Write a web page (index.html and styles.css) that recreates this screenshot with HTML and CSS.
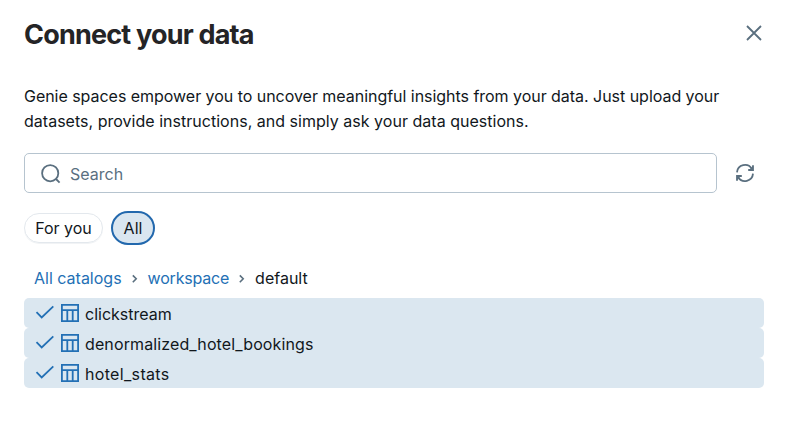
FILE: index.html
```
<!DOCTYPE html>
<html lang="en">
<head>
<meta charset="utf-8">
<title>Connect your data</title>
<link rel="stylesheet" href="styles.css">
</head>
<body>
<svg class="defs" width="0" height="0" aria-hidden="true">
  <symbol id="check" viewBox="0 0 20 20"><path d="M1.5 9.2L6.7 14.5L18.3 3.4"/></symbol>
  <symbol id="table" viewBox="0 0 20 20"><path d="M1.9 1.9H18.1V18.1H1.9ZM1.9 7.2H18.1M7.3 7.2V18.1M12.7 7.2V18.1"/></symbol>
  <symbol id="chevron" viewBox="0 0 8 10"><path d="M1.8 1.4L5.2 4.8L1.8 8.2"/></symbol>
</svg>
<main class="dialog">
  <header class="header">
    <h1 class="title">Connect your data</h1>
    <button class="icon-button" aria-label="Close"><svg class="icon close" viewBox="0 0 20 20"><path d="M3 3L17 17M17 3L3 17"/></svg></button>
  </header>
  <p class="intro"><span class="line-one">Genie spaces empower you to uncover meaningful insights from your data. Just upload your</span><br><span class="line-two">datasets, provide instructions, and simply ask your data questions.</span></p>
  <div class="search-row">
    <div class="search">
      <svg class="icon" viewBox="0 0 20 20"><circle cx="9.2" cy="9.2" r="8.1"/><path d="M15 15L18.6 18.6"/></svg>
      <span class="placeholder">Search</span>
    </div>
    <button class="icon-button" aria-label="Refresh"><svg class="icon" viewBox="0 0 20 20"><path d="M2 9.3A8 8 0 0 1 16.8 5.8M18 10.7A8 8 0 0 1 3.2 14.2"/><path d="M18 2.2V7H13.2M2 17.8V13H6.8"/><path class="solid" d="M18 3V7H14ZM2 17V13H6Z"/></svg></button>
  </div>
  <div class="filters">
    <button class="pill"><span class="foryou">For you</span></button>
    <button class="pill selected">All</button>
  </div>
  <nav class="crumbs">
    <a class="catalogs">All catalogs</a><svg class="chevron"><use href="#chevron"/></svg><a class="workspace">workspace</a><svg class="chevron"><use href="#chevron"/></svg><span class="current">default</span>
  </nav>
  <ul class="tables">
    <li class="row"><svg class="icon"><use href="#check"/></svg><svg class="icon grid"><use href="#table"/></svg><span class="name-a">clickstream</span></li>
    <li class="row"><svg class="icon"><use href="#check"/></svg><svg class="icon grid"><use href="#table"/></svg><span class="name-b">denormalized_hotel_bookings</span></li>
    <li class="row"><svg class="icon"><use href="#check"/></svg><svg class="icon grid"><use href="#table"/></svg><span class="name-c">hotel_stats</span></li>
  </ul>
</main>
</body>
</html>
```
FILE: styles.css
```
* { box-sizing: border-box; }
body { margin: 0; background: #fff; color: #11171c; font: 16px/25px Inter, "Liberation Sans", sans-serif; }
.defs { position: absolute; }
.dialog { padding: 14px 23px 0 24px; }
button { font: inherit; color: inherit; padding: 0; border: 0; background: none; }
.header { display: flex; justify-content: space-between; height: 40px; }
.title { margin: 0; padding-top: 1px; font-size: 27px; line-height: 40px; font-weight: 650; letter-spacing: -0.8px; color: #242426; white-space: nowrap; }
.icon { display: block; width: 20px; height: 20px; flex: none; fill: none; stroke: currentColor; stroke-width: 1.8; }
.icon-button { display: flex; align-items: center; justify-content: center; width: 20px; color: #5a6f7f; }
.header .icon-button { height: 38px; }
.solid { fill: currentColor; stroke: none; }
.intro { margin: 30px 0 0; white-space: nowrap; }
.line-one { letter-spacing: -0.035px; }
.line-two { letter-spacing: 0.02px; }
.search-row { display: flex; align-items: center; justify-content: space-between; margin-top: 19px; padding-right: 9px; }
.search { display: flex; align-items: center; width: 693px; height: 40px; padding: 1px 0 0 16px; border: 1px solid #b6c4cf; border-radius: 5px; color: #5a6f7f; }
.search .icon { margin-right: 9px; }
.placeholder { padding-top: 2px; }
.filters { display: flex; align-items: center; gap: 8px; height: 34px; margin-top: 18px; }
.pill { height: 30px; width: 79px; border: 1px solid #e3e8ed; border-radius: 16px; box-shadow: 0 1px 0 #f1f3f5; white-space: nowrap; }
.pill.selected { width: 44px; height: 34px; border: 2px solid #2268ad; border-radius: 17px; background: #dae6f0; box-shadow: none; }
.crumbs { display: flex; align-items: center; height: 25px; margin: 21px 0 7px 10px; color: #2370b5; }
.workspace { letter-spacing: -0.2px; }
.chevron { width: 8px; height: 10px; margin: 0 9px; fill: none; stroke: #5a6f7f; stroke-width: 1.6; }
.current { color: #11171c; }
.tables { margin: 0; padding: 0; list-style: none; width: 740px; }
.row { display: flex; align-items: center; height: 30px; padding: 2px 0 0 11px; border-radius: 5px; background: #dbe7f0; }
.row .icon { color: #2370b5; margin-top: -3px; }
.row .grid { margin: -3px 5px 0; }
.name-b { letter-spacing: 0.12px; }
.name-c { letter-spacing: 0.33px; }
```
